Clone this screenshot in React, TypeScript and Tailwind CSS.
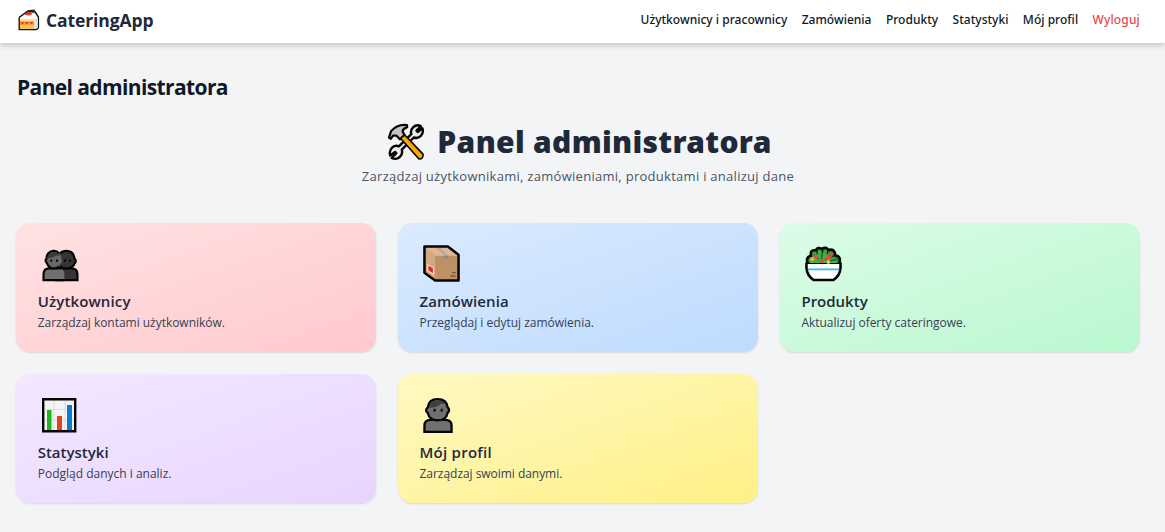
import type { ReactNode } from "react";

function CakeIcon() {
  return (
    <svg width="22" height="22" viewBox="0 0 22 22" className="block">
      <path d="M1.2 9.5 Q1.2 7.6 3.2 6.9 L10 2 L16.5 2 L20.4 8 V18.7 L18.7 20.5 H1.2 Z" fill="#fbf9f8" stroke="#15120f" strokeWidth="1.4" strokeLinejoin="round" />
      <path d="M2 10.5 H16 V19.8 H2Z" fill="#fcc63d" />
      <path d="M2 10.2 H16 V11.8 H2Z" fill="#ffe19b" />
      <path d="M16 10 L19.7 8.8 V18.3 L18.4 19.8 H16Z" fill="#e6e1e0" />
      <path d="M2 12.8h14v2.9H2z" fill="#f98a3a" />
      <path d="M3 13h3l-1.5 2.4zM7.5 13h3L9 15.4zM12 13h3l-1.5 2.4z" fill="#df321f" />
      <path d="M7 5.8 Q8 3 11 2.8 Q14.6 3.2 13.8 5.4 Q10.8 7.4 7 5.8Z" fill="#e43b2f" />
      <path d="M6.3 4.8 Q9 1.2 16.3 .7 L14.8 2.4 L16.4 4 Q12.5 2.4 10.6 2.5 Q8.2 2.8 6.3 4.8Z" fill="#23301f" stroke="#15120f" strokeWidth=".5" />
    </svg>
  );
}

function ToolsIcon() {
  return (
    <svg width="38" height="38" viewBox="0 0 38 38" className="block" strokeLinecap="round" strokeLinejoin="round">
      <path d="M26.1 4.4 Q29.6 .9 34 3.2 L29.5 7.6 L30.7 9 L35.4 5.2 Q37 10 33.6 13.2 Q30.6 15.8 26.8 14.5 L14.8 26.7 Q16 31 12.9 33.9 Q9.4 37.2 4.7 35 L9.3 30.2 L8.1 28.9 L3.2 32.5 Q1.8 27.6 5.1 24.6 Q8.2 21.8 11.9 23.3 L24.3 11.2 Q23 7.4 26.1 4.4Z" fill="#e9eaec" stroke="#050505" strokeWidth="2.4" />
      <path d="M2 14.6 L4.1 8.1 Q10.2 .9 19.9 2 L20.2 4.1 Q16.3 5.4 15.5 8.3 L17.4 12.1 L12.9 16.3 L9.3 12.5 L6.1 12.7 L3.8 15.8Z" fill="#c8c3bd" stroke="#050505" strokeWidth="2.2" />
      <path d="M13.8 15.5 L17.8 12 L36 31.1 Q36.8 36 32 36Z" fill="#f5a400" stroke="#050505" strokeWidth="1.6" />
      <path d="M16 15.4 L33.5 33.6" stroke="#f9ad08" strokeWidth="2" />
    </svg>
  );
}

function UsersIcon() {
  return (
    <svg width="37" height="33" viewBox="0 0 38 34" className="block" stroke="#050505" strokeWidth="2.2">
      <path d="M14 32 V25 Q14 20 19 20 H30 Q36.5 20 36.5 26 V32Z" fill="#343434" />
      <path d="M17 12 Q16.5 2 25 2 Q32.5 2 33.5 10 Q36 12 33.5 15 Q32 20 25 20 Q19 20 17 15Z" fill="#343434" />
      <path d="M1.5 32 V26 Q1.5 20 7.5 20 H17 Q23 20 23 26 V32Z" fill="#707070" stroke="none" />
      <path d="M23 32 H1.5 V26 Q1.5 20 7.5 20 H20" fill="none" />
      <path d="M4.5 10 Q5 2 12.5 2 Q20 2 20 10 Q21.5 13 19.3 15 Q17.5 20 12.5 20 Q7 20 5.2 15 Q2.5 12 4.5 10Z" fill="#686868" stroke="none" />
      <path d="M17.8 4.5 Q14 .3 8.5 2.8 Q4.5 5 4.5 10 Q2.5 12 5.2 15 Q7 20 12.5 20 Q15.5 20 17.3 18" fill="none" />
      <path d="M5.7 9.5 Q6 3 12.5 3 Q17 3 18.5 7 L15.5 6.5 Q10 10 5.7 9.5Z" fill="#3b3b3b" stroke="none" />
      <g fill="#080808" stroke="none"><ellipse cx="9.5" cy="12" rx="1" ry="1.5" /><ellipse cx="15.3" cy="12" rx="1" ry="1.5" /><ellipse cx="23.5" cy="12" rx="1" ry="1.5" /><ellipse cx="28.8" cy="12" rx="1" ry="1.5" /></g>
    </svg>
  );
}

function BoxIcon() {
  return (
    <svg width="37" height="37" viewBox="0 0 38 38" className="block">
      <path d="M1.5 1.5 H25.5 L36.5 10 V36.5 H12.5 L1.5 28.5Z" fill="#bd9065" />
      <path d="M1.5 1.5 L12.5 11 V36.5 L1.5 28.5Z" fill="#d3a982" />
      <path d="M1.5 1.5 H25.5 L36.5 11 H12.5Z" fill="#dfb795" />
      <path d="M12 1.5 H17 L26 11 V14 H22 V11Z" fill="#b9aaa0" />
      <path d="M21.5 11 H26 V14 H21.5Z" fill="#95877c" />
      <path d="M4.5 19.5 L11 23.5 V30.5 L4.5 26.5Z" fill="#ffe8df" />
      <path d="M5.5 21 L10.2 24 V29 L5.5 26Z" fill="#dd2834" />
      <path d="M30 28.5h3.5M28 31.8h5.5" stroke="#5a402e" strokeWidth="1.2" />
      <path d="M1.5 1.5 H25.5 L36.5 10 V36.5 H12.5 L1.5 28.5Z" fill="none" stroke="#050505" strokeWidth="2.6" strokeLinejoin="round" />
    </svg>
  );
}

function SaladIcon() {
  return (
    <svg width="37" height="36" viewBox="0 0 38 36" className="block">
      <path d="M3 18 Q0 11 6 9.5 Q5 3 11 4 Q13 0 17 2.5 Q22 -.5 24 3.5 Q31 2 31 9 Q38 10 35 18Z" fill="#258a36" stroke="#050505" strokeWidth="2.6" />
      <path d="M5 17 Q3 11 8 11 Q7 5 12 6 Q15 1 18 6 Q23 2 23 7 Q29 5 28 11 Q34 12 33 17Z" fill="#45ad45" />
      <path d="M9 8l5 5M18 4l-1 9M27 7l-6 7M33 13l-8 2" stroke="#176d2a" strokeWidth="1.6" />
      <path d="M12.5 4v4M18 2.5v4M24 4l-1.5 4M30 9l-4 2.5" stroke="#071a0a" strokeWidth="1.2" />
      <path d="M10 8l4 3-2 2-3-3zM19 13l5-4 4 1-3 4zM14 15l5-2 1 3-4 1zM25 7l3-1 1 3-3 1z" fill="#e64b3c" />
      <circle cx="7.5" cy="13" r="2.2" fill="#f3ac36" /><circle cx="24" cy="16" r="2" fill="#f7bc46" />
      <path d="M1.5 18 H36.5 V22 Q36 30 29 34.5 H9 Q2 30 1.5 22Z" fill="white" />
      <path d="M1.5 16.5 V22 Q2 30 9 34.5 H29 Q36 30 36.5 22 V16.5" fill="none" stroke="#050505" strokeWidth="2.6" />
      <path d="M2.8 23.5 H35.2" stroke="#35bde8" strokeWidth="2" />
    </svg>
  );
}

function ChartIcon() {
  return (
    <svg width="35" height="35" viewBox="0 0 35 35" className="block">
      <path d="M2 2H33V33H2Z" fill="#f5f4f5" />
      <path d="M3 11.5H32M3 22H32M12 3V32M23 3V32" stroke="#dededf" strokeWidth="1" />
      <path d="M5 12H9.5V32.5H5Z" fill="#20b51c" /><path d="M15 18H20V32.5H15Z" fill="#e44325" /><path d="M25 7H30V32.5H25Z" fill="#087bce" />
      <path d="M1.2 1.2H33.2V33.2H1.2Z" fill="none" stroke="#050505" strokeWidth="2.4" />
    </svg>
  );
}

function UserIcon() {
  return (
    <svg width="30" height="37" viewBox="0 0 31 37" className="block" stroke="#050505" strokeWidth="2.4">
      <path d="M1.5 35.5 V29 Q1.5 23 8 23 H23 Q29.5 23 29.5 29 V35.5Z" fill="#707070" />
      <path d="M5 10 Q6 1.5 15 1.5 Q24.5 1.5 25.5 10 Q28.5 13 25.3 16 Q24 23.5 15 23.5 Q6.5 23.5 5 16 Q1.5 13 5 10Z" fill="#707070" />
      <path d="M6.3 10.5 Q7 2.7 15 2.7 Q21 2.7 23 7 L19 6 Q13 11 6.3 10.5Z" fill="#404040" stroke="none" />
      <g fill="#080808" stroke="none"><ellipse cx="12" cy="13" rx="1.1" ry="1.7" /><ellipse cx="19.3" cy="13" rx="1.1" ry="1.7" /></g>
    </svg>
  );
}

type CardProps = { icon: ReactNode; title: string; text: string; color: string; titleClass: string; textClass: string };

const cards: CardProps[] = [
  { icon: <div className="pt-[26px] pl-1"><UsersIcon /></div>, title: "Użytkownicy", text: "Zarządzaj kontami użytkowników.", color: "from-[#ffe2e2] to-[#ffc9cf]", titleClass: "tracking-[0.13px]", textClass: "tracking-[-0.03px]" },
  { icon: <div className="pt-[22px] pl-[3px]"><BoxIcon /></div>, title: "Zamówienia", text: "Przeglądaj i edytuj zamówienia.", color: "from-[#dbeafe] to-[#bedbff]", titleClass: "tracking-[0.1px]", textClass: "tracking-[-0.01px]" },
  { icon: <div className="pt-[23px] pl-1"><SaladIcon /></div>, title: "Produkty", text: "Aktualizuj oferty cateringowe.", color: "from-[#dcfce7] to-[#b9f8cf]", titleClass: "tracking-normal", textClass: "tracking-[-0.03px]" },
  { icon: <div className="pt-[24px] pl-1"><ChartIcon /></div>, title: "Statystyki", text: "Podgląd danych i analiz.", color: "from-[#f3e8ff] to-[#e9d4ff]", titleClass: "tracking-normal", textClass: "tracking-normal" },
  { icon: <div className="pt-[23px] pl-[3px]"><UserIcon /></div>, title: "Mój profil", text: "Zarządzaj swoimi danymi.", color: "from-[#fef9c2] to-[#fff085]", titleClass: "tracking-[0.25px]", textClass: "tracking-[-0.04px]" },
];

function Card({ icon, title, text, color, titleClass, textClass }: CardProps) {
  return (
    <a className={`flex h-[129.2px] flex-col rounded-[14.4px] bg-linear-to-br px-[21.7px] shadow-[0_1px_2px_rgba(0,0,0,0.12)] ${color}`}>
      <div className="h-[66px]">{icon}</div>
      <h2 className={`text-[15px] leading-6 font-semibold whitespace-nowrap text-[#1e2939] ${titleClass}`}>{title}</h2>
      <p className={`pt-px text-[12px] leading-[18px] whitespace-nowrap text-[#364153] ${textClass}`}>{text}</p>
    </a>
  );
}

export default function App() {
  return (
    <div className="min-h-screen bg-[#f3f4f6] font-['Open_Sans','Noto_Sans',sans-serif]">
      <header className="flex h-[43px] items-center justify-between bg-white pr-[25px] pl-[18px] shadow-[0_2px_6px_rgba(0,0,0,0.22)]">
        <div className="flex items-center gap-[6px] pb-1">
          <CakeIcon />
          <span className="text-[17.5px] leading-6 font-bold tracking-[-0.1px] text-[#1e2939]">CateringApp</span>
        </div>
        <nav className="flex items-center gap-[14.4px] pb-1 font-['Noto_Sans',sans-serif] text-[12px] leading-5 font-medium tracking-[0.02px] whitespace-nowrap text-[#101828]">
          <a>Użytkownicy i pracownicy</a>
          <a>Zamówienia</a>
          <a>Produkty</a>
          <a>Statystyki</a>
          <a>Mój profil</a>
          <a className="tracking-[0.15px] text-[#e7474c]">Wyloguj</a>
        </nav>
      </header>
      <main className="w-[1140px] pl-4">
        <h1 className="pt-[29px] pl-px text-[21px] leading-[30px] font-bold tracking-[-0.62px] text-[#101828]">Panel administratora</h1>
        <section className="flex flex-col items-center pt-5">
          <div className="flex h-[40px] items-center gap-[12px] pl-[3px]">
            <ToolsIcon />
            <span className="font-['Noto_Sans',sans-serif] text-[30px] leading-10 font-black tracking-[0.32px] whitespace-nowrap text-[#1e2939]">Panel administratora</span>
          </div>
          <p className="pt-[3px] text-[13px] leading-[22px] tracking-[0.28px] whitespace-nowrap text-[#4a5565]">Zarządzaj użytkownikami, zamówieniami, produktami i analizuj dane</p>
        </section>
        <section className="mt-[36px] grid grid-cols-3 gap-x-[21.6px] gap-y-[22px]">
          {cards.map((card) => <Card key={card.title} {...card} />)}
        </section>
      </main>
    </div>
  );
}
